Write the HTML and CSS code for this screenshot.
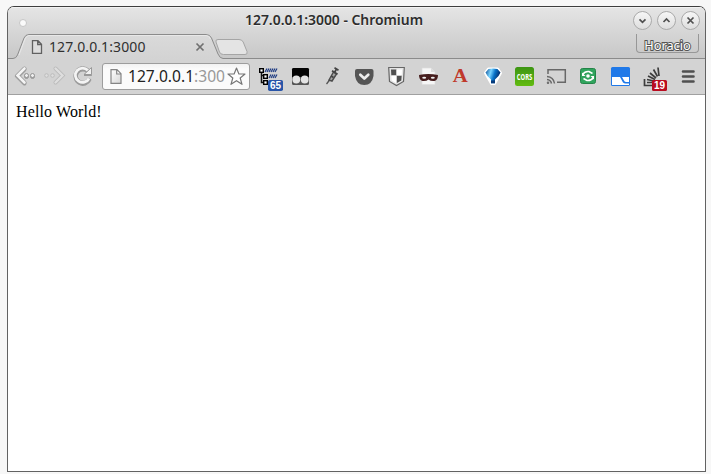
FILE: index.html
```html
<!DOCTYPE html>
<html lang="en">
<head>
<meta charset="utf-8">
<title>127.0.0.1:3000</title>
<link rel="stylesheet" href="styles.css">
</head>
<body>
<div class="window">
  <header class="chrome">
    <div class="titlebar">
      <span class="dot"></span>
      <span class="title">127.0.0.1:3000 - Chromium</span>
      <div class="controls">
        <span class="control"><svg width="17" height="17"><path d="M5.500 7.300l3 3 3-3"/></svg></span>
        <span class="control"><svg width="17" height="17"><path d="M5.500 10l3-3 3 3"/></svg></span>
        <span class="control"><svg width="17" height="17"><path d="M5.500 5.500l6 6m0-6l-6 6"/></svg></span>
      </div>
    </div>
    <div class="tabstrip">
      <svg class="tabshape" width="697" height="25" viewBox="0 0 697 25">
        <defs><linearGradient id="tab" x1="0" y1="0" x2="0" y2="1"><stop offset="0" stop-color="#dadada"/><stop offset="1" stop-color="#d3d3d3"/></linearGradient></defs>
        <path d="M0 24.500H5Q8 24.500 9.500 21L16 4Q17.500.5 21 .5H198Q202 .5 203.500 4L210 20Q212 24.500 215 24.500H697V25H0Z" fill="url(#tab)"/>
        <path d="M0 24.500H5Q8 24.500 9.500 21L16 4Q17.500.5 21 .5H198Q202 .5 203.500 4L210 20Q212 24.500 215 24.500H697" fill="none" stroke="#8b8b8b"/>
        <path d="M11 21L17 5Q18.500 1.500 21 1.500H198Q201 1.500 202.500 5" fill="none" stroke="#e8e8e8"/>
        <path d="M210 5.500H231Q234 5.500 235.200 8L239 17.500Q240 20.500 237 20.500H215.500Q212.500 20.500 211.500 18L208 8Q207.200 5.500 210 5.500Z" fill="#e4e4e4" stroke="#a5a5a5"/>
      </svg>
      <div class="tab">
        <svg class="page" width="12" height="14"><path d="M1.500.7H7L10.500 4.200V13.300H1.500ZM6.700.7V4.500H10.500" fill="#dedede" stroke="#616161" stroke-width="1.300"/></svg>
        <span class="tabname">127.0.0.1:3000</span>
        <svg width="10" height="10"><path d="M1.500 1.500l7 7m0-7l-7 7" stroke="#707070" stroke-width="1.700"/></svg>
      </div>
      <span class="user">Horacio</span>
    </div>
    <div class="toolbar">
      <svg width="94" height="36" viewBox="8 59 94 36">
        <defs><filter id="soft" x="-20%" y="-20%" width="140%" height="150%"><feDropShadow dx="0" dy="1" stdDeviation=".6" flood-color="#555" flood-opacity=".45"/></filter></defs>
        <g fill="none" filter="url(#soft)">
          <path d="M24.500 68.500L17.500 75.500L24.500 82.500" stroke="#999" stroke-width="4" stroke-linecap="round"/>
          <path d="M24.500 68.500L17.500 75.500L24.500 82.500" stroke="#f4f4f4" stroke-width="2.600" stroke-linecap="round"/>
          <g fill="#eee" stroke="#929292"><circle cx="26.500" cy="75.500" r="2"/><circle cx="32.500" cy="75.500" r="2"/></g>
        </g>
        <g fill="none">
          <path d="M55.500 68.500L62.500 75.500L55.500 82.500" stroke="#bababa" stroke-width="4" stroke-linecap="round"/>
          <path d="M55.500 68.500L62.500 75.500L55.500 82.500" stroke="#dedede" stroke-width="2.400" stroke-linecap="round"/>
          <g fill="#dedede" stroke="#bcbcbc"><circle cx="46.500" cy="75.500" r="1.800"/><circle cx="52.500" cy="75.500" r="1.800"/></g>
        </g>
        <g fill="none" filter="url(#soft)">
          <path d="M88 70.500A7.200 7.200 0 1 0 89.500 78.500" stroke="#999" stroke-width="4.200"/>
          <path d="M88 70.500A7.200 7.200 0 1 0 89 78.500" stroke="#f4f4f4" stroke-width="2.800"/>
          <path d="M84 74.500H91.500V67.500Z" fill="#f0f0f0" stroke="#999"/>
        </g>
      </svg>
      <div class="address">
        <svg width="12" height="15"><defs><linearGradient id="paper" x2="1" y2="1"><stop stop-color="#fff"/><stop offset="1" stop-color="#d6d6d6"/></linearGradient></defs><path d="M1 .7H7L11 4.700V14.300H1ZM6.700.7V5H11" fill="url(#paper)" stroke="#858585" stroke-width="1.200"/></svg>
        <span class="url">127.0.0.1<span class="port">:300</span></span>
        <svg class="star" width="19" height="19"><path d="M9.500 1L11.900 7H18L13.200 11L15 17.300L9.500 13.700L4 17.300L5.800 11L1 7H7.100Z" fill="#fff" stroke="#777" stroke-width="1.200" stroke-linejoin="round"/></svg>
      </div>
      <div class="extensions">
        <svg viewBox="254 59 32 36">
          <path d="M261.500 72V82.500H264M261.500 75.500H264" stroke="#111" fill="none" stroke-width="1.500"/>
          <g fill="#fff" stroke="#000" stroke-width="1.400"><rect x="259.700" y="68.700" width="3.600" height="3.600"/><rect x="263.700" y="74.700" width="3.600" height="3.600"/><rect x="263.700" y="80.700" width="3.600" height="3.600"/></g>
          <path d="M265 72l2-3.500m0 3.500l2-3.500m0 3.500l2-3.500m0 3.500l2-3.500m0 3.500l2-3.500m0 3.500l2-3.500M269 78l2-3.500m0 3.500l2-3.500m0 3.500l2-3.500m0 3.500l2-3.500" stroke="#203d83" stroke-width="1.200" fill="none"/>
          <rect x="268" y="80" width="15" height="11" rx="1.800" fill="#2855a8"/><text class="badge" x="275.500" y="89">65</text>
        </svg>
        <svg viewBox="286 59 32 36">
          <rect x="292" y="68" width="17" height="17" rx="1.500" fill="#555"/><path d="M292 69.500Q292 68 293.500 68H307.500Q309 68 309 69.500V77H292Z" fill="#050505"/><circle cx="296.300" cy="79.500" r="3.900" fill="#e3e3e3"/><circle cx="304.700" cy="79.500" r="3.900" fill="#e3e3e3"/>
        </svg>
        <svg viewBox="318 59 32 36">
          <path d="M326.500 84L330 79.500" stroke="#555" stroke-width="1.300"/><path d="M329 80L333.500 72L336.500 74L332 81Z" fill="#a5a5a5" stroke="#4d4d4d" stroke-width="1.500"/><path d="M334.500 72.500L336.500 69M332 70.800l5.500 3.500M334.500 67.700l4 2.500M331 76l2.500 1.500" stroke="#444" stroke-width="1.700"/>
        </svg>
        <svg viewBox="350 59 32 36">
          <path d="M357 69H371.500Q373.500 69 373.500 71V76Q372 85 364.300 85Q356.500 85 355 76V71Q355 69 357 69Z" fill="#555"/><path d="M360.300 74.800l4 3.800 4-3.800" fill="none" stroke="#eee" stroke-width="2.700" stroke-linecap="round" stroke-linejoin="round"/>
        </svg>
        <svg viewBox="382 59 32 36">
          <path d="M388.700 67.500H404.300L403.500 81.500L396.500 85.500L389.500 81.500Z" fill="#e5e5e5" stroke="#666" stroke-width="1.200"/><path d="M391 69.500H396.500V75.500H391.300ZM396.500 75.500H401.700L401.300 80.500L396.500 83.300Z" fill="#505050"/><path d="M396.500 69.500H402L401.700 75.500H396.500ZM391.300 75.500H396.500V83.300L391.700 80.500Z" fill="#fff"/>
        </svg>
        <svg viewBox="414 59 32 36">
          <path d="M422 68H431L435 72V84.500H422Z" fill="#f6f6f6" stroke="#ddd" stroke-width=".7"/><path d="M431 68V72H435" fill="#ddd"/><path d="M419 75Q428 73 438 75Q438 80 434.500 81Q430.500 81.300 428.500 79.500Q426.500 81.300 422.500 81Q419 80 419 75Z" fill="#461d1d"/><ellipse cx="424.200" cy="77.700" rx="2" ry="1" fill="#eee"/><ellipse cx="432.800" cy="77.700" rx="2" ry="1" fill="#eee"/>
        </svg>
        <svg viewBox="446 59 32 36"><text class="letter" x="460.200" y="82" textLength="15" lengthAdjust="spacingAndGlyphs">A</text></svg>
        <svg viewBox="478 59 32 36">
          <defs><linearGradient id="blue" x2="1" y2=".3"><stop stop-color="#0a478f"/><stop offset=".38" stop-color="#7ad4ff"/><stop offset=".65" stop-color="#0872c8"/><stop offset="1" stop-color="#052b68"/></linearGradient></defs>
          <path d="M488.500 69H497.500L500.500 73L494.500 83.500H491.500L485.500 73Z" fill="#fff" stroke="#fff" stroke-width="3" stroke-linejoin="round"/><path d="M488.500 69Q493 68 497.500 69L500.500 72.500L498.500 76L495 79.500V83.300H491V79.500L487.500 76L485.500 72.500Z" fill="url(#blue)"/><path d="M491 80.500H495V83.300H491Z" fill="#083b7b"/>
        </svg>
        <svg viewBox="510 59 32 36">
          <defs><linearGradient id="green" x2="0" y2="1"><stop stop-color="#3d9513"/><stop offset="1" stop-color="#62bb10"/></linearGradient></defs><rect x="515" y="67" width="19" height="19" rx="2.500" fill="url(#green)"/><text class="cors" x="524.500" y="79.800" textLength="15.500" lengthAdjust="spacingAndGlyphs">CORS</text>
        </svg>
        <svg viewBox="542 59 32 36" fill="none" stroke="#686868" stroke-width="1.500">
          <path d="M548 74V69.700H565.300V82.300H557"/><path d="M547 76.500Q553.500 77 554.500 83.500M547 79.500Q550.800 80 551.500 83.500"/><circle cx="548" cy="82.700" r=".5"/>
        </svg>
        <svg viewBox="574 59 32 36">
          <rect x="580.500" y="68.500" width="15" height="15" rx="2" fill="#30a45d" stroke="#248448"/><path d="M582.500 74.500Q585 71 589 71.500L592.500 73.500M593.500 77.500Q591 81 587 80.500L583.500 78.500" fill="none" stroke="#fff" stroke-width="1.600"/><path d="M582 72.500V76H585.500M594 79.500V76H590.500" fill="#fff"/><circle cx="588" cy="76" r="1.800" fill="#fff"/>
        </svg>
        <svg viewBox="606 59 32 36">
          <rect x="611" y="67" width="19" height="19" rx="1.500" fill="#2079e8"/><path d="M612 77H620L623 82.500Q624 83.500 625.500 83.500H629V85H612Z" fill="#fff"/><path d="M622 77H629V82H626.500Q624.500 82 624 80.500Z" fill="#fff"/>
        </svg>
        <svg viewBox="638 59 32 36">
          <path d="M644.500 79V85.500H653M647 82.500H654M647 79.500L654 81M648 76L655 79.500M650 73L656 78M653.500 69.500L657.500 76.500M658 67.500L659 76" fill="none" stroke="#3d3d3d" stroke-width="1.700"/>
          <rect x="652" y="80" width="15" height="11" rx="1.500" fill="#b90c20"/><text class="badge" x="659.500" y="89">19</text>
        </svg>
      </div>
      <svg class="menu" width="35" height="36" viewBox="670 59 35 36"><path d="M683 71.500H693.500M683 76.500H693.500M683 81.500H693.500" stroke="#505050" stroke-width="2.600" stroke-linecap="round"/></svg>
    </div>
  </header>
  <main>Hello World!</main>
</div>
</body>
</html>
```
FILE: styles.css
```css
* { box-sizing: border-box; }
body {
  margin: 0;
  padding: 6px 5px 2px 7px;
  width: 711px;
  height: 474px;
  overflow: hidden;
  background: #f7f7f7;
  font-family: "Noto Sans", "Open Sans", sans-serif;
}
.window {
  display: flex;
  flex-direction: column;
  height: 466px;
  border: 1px solid #626262;
  border-top-color: #3e3e3e;
  border-radius: 7px 7px 0 0;
  background: #fff;
  overflow: hidden;
}
.chrome { height: 88px; border-bottom: 1px solid #a0a0a0; background: #d3d3d3; }
.titlebar {
  display: grid;
  grid-template-columns: 80px 1fr 80px;
  align-items: center;
  height: 27px;
  padding-right: 5px;
  background: linear-gradient(#e5e5e5, #d5d5d5);
  box-shadow: inset 0 1px #f2f2f2;
}
.dot { width: 8px; height: 8px; margin: 5px 0 0 11px; border: 1px solid #c6c6c6; border-radius: 50%; background: #fafafa; }
.title { padding-right: 40px; padding-bottom: 2px; font-size: 13.9px; line-height: 24px; font-weight: 600; color: #2d2d2d; text-align: center; white-space: nowrap; text-shadow: 0 1px #f0f0f0; }
.controls { display: flex; justify-content: flex-end; gap: 5px; }
.control { display: flex; width: 19px; height: 19px; border: 1px solid #a9a9a9; border-radius: 50%; background: linear-gradient(#f6f6f6, #dedede); }
.control path { fill: none; stroke: #505050; stroke-width: 1.7; }
.tabstrip { display: grid; grid-template-columns: 197px 1fr 63px; height: 25px; padding-right: 6px; background: linear-gradient(#d5d5d5, #c7c7c7); }
.tabshape { grid-area: 1 / 1 / 2 / 4; margin-right: -6px; }
.tab { display: flex; align-items: center; z-index: 1; grid-area: 1 / 1; padding-left: 23px; }
.page { margin-right: 6px; }
.tabname { flex: 1; font-size: 14px; line-height: 24px; letter-spacing: .1px; color: #303030; }
.user {
  z-index: 1;
  grid-area: 1 / 3;
  height: 19px;
  border: 1px solid #979797;
  border-top: 0;
  border-radius: 0 0 4px 4px;
  font-size: 12.8px;
  line-height: 22px;
  text-align: center;
  color: #fff;
  -webkit-text-stroke: 2px #555;
  paint-order: stroke fill;
}
.toolbar { display: flex; height: 35px; }
.address {
  display: flex;
  align-items: center;
  width: 148px;
  height: 27px;
  margin-top: 4px;
  padding-left: 7px;
  border: 1px solid #9d9d9d;
  border-radius: 3px;
  background: linear-gradient(#f2f2f2, #fbfbfb 5px);
}
.url { width: 99px; margin-left: 6px; padding-bottom: 2px; font-size: 15.6px; line-height: 22px; color: #222; white-space: nowrap; }
.port { color: #999; }
.extensions { display: flex; margin-left: 4px; }
.extensions svg { width: 32px; height: 36px; flex: none; }
.badge { font: bold 10px "Liberation Sans", sans-serif; fill: #fff; text-anchor: middle; }
.letter { font: bold 18px "Liberation Serif", serif; fill: #c0392b; text-anchor: middle; }
.cors { font: bold 9.5px "Open Sans", sans-serif; fill: #fff; text-anchor: middle; }
main { padding: 8px; font: 16px/18px "Liberation Serif", serif; letter-spacing: .13px; color: #000; }
```
